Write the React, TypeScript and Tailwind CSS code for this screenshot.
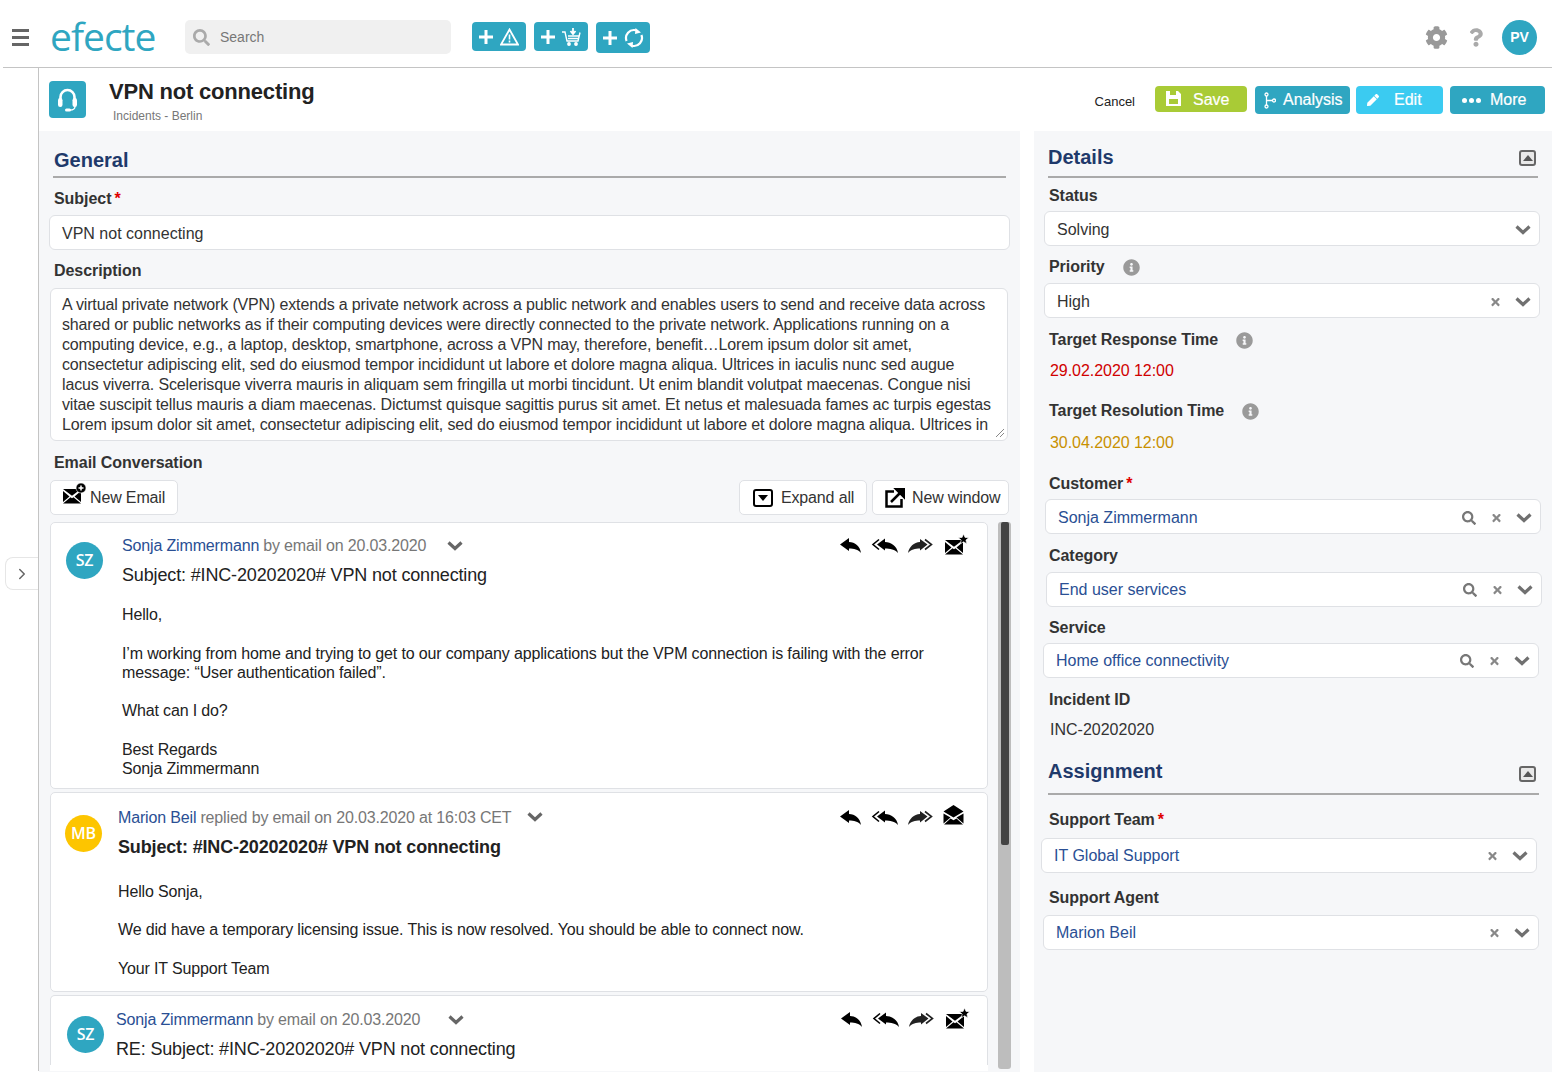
import { ReactNode } from "react";
import { FaCog, FaPen, FaTimes, FaSearch, FaQuestion, FaInfoCircle } from "react-icons/fa";
import { ChevronRight } from "lucide-react";

const DESCRIPTION = [
  "A virtual private network (VPN) extends a private network across a public network and enables users to send and receive data across",
  "shared or public networks as if their computing devices were directly connected to the private network. Applications running on a",
  "computing device, e.g., a laptop, desktop, smartphone, across a VPN may, therefore, benefit…Lorem ipsum dolor sit amet,",
  "consectetur adipiscing elit, sed do eiusmod tempor incididunt ut labore et dolore magna aliqua. Ultrices in iaculis nunc sed augue",
  "lacus viverra. Scelerisque viverra mauris in aliquam sem fringilla ut morbi tincidunt. Ut enim blandit volutpat maecenas. Congue nisi",
  "vitae suscipit tellus mauris a diam maecenas. Dictumst quisque sagittis purus sit amet. Et netus et malesuada fames ac turpis egestas",
  "Lorem ipsum dolor sit amet, consectetur adipiscing elit, sed do eiusmod tempor incididunt ut labore et dolore magna aliqua. Ultrices in",
];

function Envelope({ badge }: { badge?: "star" | "plus" }) {
  return (
    <svg width="24" height="21" viewBox="0 0 24 21">
      <path d="M0 6h18l-9 6.800z M0 8v11l6.500-5.500z M18 8v11l-6.500-5.500z M0 20.500h18l-7.500-6.200-1.500 1-1.500-1z" fill="#000" />
      {badge === "star" && <path d="M18.500 0l1.500 3.400 3.700.3-2.800 2.400.9 3.600-3.300-1.900-3.200 1.900.9-3.600-2.800-2.400 3.700-.3z" fill="#000" stroke="#fff" strokeWidth=".6" />}
      {badge === "plus" && (
        <g>
          <circle cx="18" cy="5" r="5" fill="#000" stroke="#fff" strokeWidth=".6" />
          <path d="M18 2.500v5M15.500 5h5" stroke="#fff" strokeWidth="1.500" />
        </g>
      )}
    </svg>
  );
}

function OpenEnvelope() {
  return (
    <svg width="21" height="20" viewBox="0 0 21 20">
      <path d="M10.500 0l10 6.500-10 6-10-6z M.5 8.500v10l7-6z M20.500 8.500v10l-7-6z M1 19.500h19l-6.500-6-3 1.700-3-1.700z" fill="#000" />
    </svg>
  );
}

function ReplyIcon() {
  return (
    <svg width="21" height="15" viewBox="0 0 21 15">
      <path d="M0 6.500L9 0v4c6 0 11 4 12 11-3-3.500-7-4.500-12-4.500V13z" fill="#000" />
    </svg>
  );
}

function ReplyAllIcon() {
  return (
    <svg width="27" height="15" viewBox="0 0 27 15">
      <path d="M8 1.500L2 6.500l6 5" stroke="#000" strokeWidth="1.600" fill="none" />
      <path d="M6 6.500L14 .5v3.500c6 0 12 4 13 11-3-3.500-8-4.500-13-4.500V12.500z" fill="#000" />
    </svg>
  );
}

function ForwardAllIcon() {
  return (
    <svg width="25" height="15" viewBox="0 0 25 15">
      <path d="M17 1.500l6.500 5-6.500 5" stroke="#222" strokeWidth="1.600" fill="none" />
      <path d="M19.500 6.500L12 1v3C6 4 1 9 0 15c3-3.500 7-4.500 12-4.500V12.500z" fill="#222" />
    </svg>
  );
}

function EmailActions({ open }: { open?: boolean }) {
  return (
    <div className="flex items-center">
      <ReplyIcon />
      <span className="ml-[10px] flex"><ReplyAllIcon /></span>
      <span className="ml-[10px] flex"><ForwardAllIcon /></span>
      {open ? (
        <span className="ml-[10px] flex -mt-[4px]"><OpenEnvelope /></span>
      ) : (
        <span className="ml-[12px] flex -mt-[2px]"><Envelope badge="star" /></span>
      )}
    </div>
  );
}

function Avatar({ initials, color }: { initials: string; color: string }) {
  return (
    <div
      className={`w-[37px] h-[37px] rounded-full flex items-center justify-center text-white text-[16px] font-semibold shrink-0 ${color}`}
      style={{ fontFamily: '"Open Sans", sans-serif' }}
    >
      {initials}
    </div>
  );
}

function HeadButton({ children, h = "h-[29px]" }: { children: ReactNode; h?: string }) {
  return (
    <div className={`${h} w-[54px] bg-[#2fa6c1] rounded-[4px] flex items-center pl-[7px] gap-[7px] text-white`}>
      <svg width="14" height="14" viewBox="0 0 14 14"><path d="M7 0v14M0 7h14" stroke="#fff" strokeWidth="3" /></svg>
      {children}
    </div>
  );
}

function ActionButton({ bg, w, h, children, className = "" }: { bg: string; w: string; h: string; children: ReactNode; className?: string }) {
  return (
    <div className={`${bg} ${w} ${h} ${className} rounded-[4px] flex items-center text-white text-[16px] tracking-normal [-webkit-text-stroke:0.2px_white]`}>
      {children}
    </div>
  );
}

function ToolButton({ icon, label, w }: { icon: ReactNode; label: string; w: string }) {
  return (
    <div className={`${w} h-[35px] bg-white border border-[#dfe1e5] rounded-[5px] flex items-center text-[16px] text-[#333] whitespace-nowrap`}>
      {icon}
      {label}
    </div>
  );
}

function Label({ text, required, info, className = "" }: { text: string; required?: boolean; info?: boolean; className?: string }) {
  return (
    <div className={`flex items-center h-[20px] text-[16px] font-bold text-[#333] tracking-[-0.05px] whitespace-nowrap ${className}`}>
      {text}
      {required && <span className="text-[#e00000] ml-[3px]">*</span>}
      {info && <FaInfoCircle className="w-[17px] h-[17px] text-[#9a9a9a] ml-[18px]" />}
    </div>
  );
}

function Chevron({ className = "" }: { className?: string }) {
  return (
    <svg width="16" height="11" viewBox="0 0 16 11" fill="none" className={className}>
      <path d="M1.500 2.500L8 8.500l6.500-6" stroke="currentColor" strokeWidth="3.200" />
    </svg>
  );
}

function Select({
  value,
  link,
  search,
  clear,
  className = "",
}: {
  value: string;
  link?: boolean;
  search?: boolean;
  clear?: boolean;
  className?: string;
}) {
  return (
    <div className={`h-[35px] w-[496px] bg-white border border-[#dfe1e5] rounded-[6px] flex items-center pl-[12px] pr-[8px] text-[16px] tracking-normal ${link ? "text-[#2a4f94]" : "text-[#333]"} ${className}`}>
      <span className="flex-1 whitespace-nowrap">{value}</span>
      {search && <FaSearch className="w-[14px] h-[14px] text-[#777] mr-[15px]" />}
      {clear && <FaTimes className="w-[11px] h-[12px] text-[#888] mr-[14px]" />}
      <Chevron className="text-[#707070]" />
    </div>
  );
}

function SectionToggle() {
  return (
    <div className="w-[17px] h-[16px] border-2 border-[#666] rounded-[3px] bg-[#e8e8e8] flex items-center justify-center">
      <div className="w-0 h-0 border-l-[5px] border-r-[5px] border-b-[6px] border-l-transparent border-r-transparent border-b-[#555]" />
    </div>
  );
}

export default function App() {
  return (
    <div className="w-[1552px] h-[1080px] bg-white overflow-hidden text-[#222] tracking-[-0.15px]" style={{ fontFamily: '"Liberation Sans", Arial, sans-serif' }}>
      {/* top bar */}
      <div className="h-[68px] ml-[3px] border-b border-[#c4c4c4] flex items-center pt-[7px]">
        <div className="ml-[9px] w-[17px] flex flex-col gap-[4px] mt-[1px]">
          <div className="h-[3px] bg-[#666]" />
          <div className="h-[3px] bg-[#666]" />
          <div className="h-[3px] bg-[#666]" />
        </div>
        <div className="ml-[21px] w-[110px] -mt-[4px] text-[39px] leading-none text-[#2fa6c1] font-normal tracking-[-1px]" style={{ fontFamily: '"Open Sans", sans-serif' }}>
          efecte
        </div>
        <div className="ml-[25px] w-[266px] h-[34px] bg-[#f0f0f0] rounded-[5px] flex items-center pl-[8px] text-[14px] text-[#777] tracking-normal">
          <FaSearch className="w-[17px] h-[17px] text-[#aaa] mr-[10px]" />
          Search
        </div>
        <div className="ml-[21px] flex gap-[8px] items-start h-[31px] mt-[1px]">
          <HeadButton>
            <svg width="19" height="18" viewBox="0 0 19 18" fill="none"><path d="M9.500 1.500L18 16.500H1z" stroke="#fff" strokeWidth="1.800" /><path d="M9.500 6.500v5M9.500 12.500v2" stroke="#fff" strokeWidth="1.600" /></svg>
          </HeadButton>
          <HeadButton>
            <svg width="19" height="18" viewBox="0 0 19 18" fill="none" stroke="#fff" strokeWidth="1.400"><path d="M0 4h3l2 9h11l2-8.500M6 8h11M6 10.500h10" /><path d="M11 0v5M8.500 3l2.500 3 2.500-3" strokeWidth="1.800" /><circle cx="7" cy="16" r="1.200" fill="#fff" /><circle cx="14" cy="16" r="1.200" fill="#fff" /></svg>
          </HeadButton>
          <HeadButton h="h-[31px]">
            <svg width="20" height="20" viewBox="0 0 20 20" fill="none" stroke="#fff" strokeWidth="2.200">
              <path d="M2.600 13A8 8 0 0 1 12 2.300" />
              <path d="M17.400 7A8 8 0 0 1 8 17.700" />
              <path d="M11.500 0L17 4.500 11 6zM8.500 20L3 15.500 9 14z" fill="#fff" stroke="none" />
            </svg>
          </HeadButton>
        </div>
        <div className="ml-auto mr-[15px] flex items-center">
          <FaCog className="w-[23px] h-[23px] text-[#999]" />
          <FaQuestion className="w-[14px] h-[19px] text-[#aaa] ml-[21px]" />
          <div className="ml-[19px] w-[35px] h-[35px] rounded-full bg-[#2fa6c1] text-white text-[14px] font-bold flex items-center justify-center tracking-normal">PV</div>
        </div>
      </div>

      <div className="flex">
        {/* collapsed left rail */}
        <div className="w-[39px] h-[1003px] border-r border-[#c4c4c4] shrink-0 pt-[489px] pl-[5px]">
          <div className="w-[33px] h-[33px] border border-r-0 border-[#e6e6e6] rounded-l-[8px] flex items-center justify-center text-[#666]">
            <ChevronRight className="w-[18px] h-[18px]" />
          </div>
        </div>

        <div className="flex-1">
          {/* title row */}
          <div className="h-[63px] flex">
            <div className="ml-[10px] mt-[13px] w-[37px] h-[37px] bg-[#2fa6c1] rounded-[4px] flex items-center justify-center">
              <svg width="21" height="24" viewBox="0 0 21 24" fill="none" stroke="#fff" strokeLinecap="round">
                <path d="M3.500 14V9a7 7 0 0 1 14 0v5" strokeWidth="2.600" />
                <rect x="1" y="10" width="4.500" height="9" rx="2.200" fill="#fff" stroke="none" />
                <rect x="15.500" y="10" width="4.500" height="9" rx="2.200" fill="#fff" stroke="none" />
                <path d="M18 18.500c0 2.500-2.500 3.500-5 3.500" strokeWidth="1.300" />
                <rect x="8" y="20.500" width="6" height="3" rx="1.500" fill="#fff" stroke="none" />
              </svg>
            </div>
            <div className="ml-[23px]">
              <div className="mt-[10px] text-[22px] leading-[28px] font-bold text-[#222] tracking-[-0.2px] whitespace-nowrap">VPN not connecting</div>
              <div className="mt-[3px] ml-[4px] text-[12px] leading-[14px] text-[#777] tracking-normal">Incidents - Berlin</div>
            </div>
            <div className="ml-auto mr-[7px] flex items-start mt-[18px]">
              <div className="text-[13px] mt-[6px] mr-[20px] text-[#222] tracking-normal">Cancel</div>
              <ActionButton bg="bg-[#a9cb36]" w="w-[92px]" h="h-[26px]" className="pl-[11px] pt-[1px]">
                <svg width="15" height="15" viewBox="0 0 15 15" className="mr-[12px] -mt-[2px]">
                  <path d="M0 0h12l3 3v12H0z M4 0v4h6V0z M3 8v5h9V8z" fill="#fff" fillRule="evenodd" />
                </svg>
                Save
              </ActionButton>
              <ActionButton bg="bg-[#2fa6c1]" w="w-[95px]" h="h-[28px]" className="ml-[8px] pl-[9px]">
                <svg width="12" height="17" viewBox="0 0 12 17" fill="none" stroke="#fff" strokeWidth="1.300" className="mr-[7px]"><circle cx="2.500" cy="2.500" r="1.500" /><circle cx="2.500" cy="14.500" r="1.500" /><circle cx="10" cy="8.500" r="1.500" /><path d="M2.500 4v9M2.500 8.500h6" /></svg>
                Analysis
              </ActionButton>
              <ActionButton bg="bg-[#3bcbf1]" w="w-[87px]" h="h-[28px]" className="ml-[6px] pl-[11px]">
                <FaPen className="w-[12px] h-[12px] mr-[15px]" /> Edit
              </ActionButton>
              <ActionButton bg="bg-[#2fa6c1]" w="w-[95px]" h="h-[28px]" className="ml-[7px] pl-[12px]">
                <span className="flex gap-[2px] mr-[9px]">
                  <span className="w-[5px] h-[5px] rounded-full bg-white" />
                  <span className="w-[5px] h-[5px] rounded-full bg-white" />
                  <span className="w-[5px] h-[5px] rounded-full bg-white" />
                </span>
                More
              </ActionButton>
            </div>
          </div>

          <div className="flex">
            {/* General */}
            <div className="w-[981px] h-[941px] bg-[#f6f7f9] shrink-0 overflow-hidden">
              <div className="ml-[14px] mr-[14px] mt-[17px] h-[30px] border-b-2 border-[#aaa] text-[20px] leading-[24px] font-bold text-[#1f3a6b] tracking-normal pl-[1px]">General</div>
              <Label text="Subject" required className="ml-[15px] mt-[11px]" />
              <div className="ml-[10px] mt-[6px] w-[961px] h-[35px] bg-white border border-[#dfe1e5] rounded-[6px] flex items-center pl-[12px] pt-[2px] text-[16px] text-[#333] tracking-normal">VPN not connecting</div>
              <Label text="Description" className="ml-[15px] mt-[11px]" />
              <div className="ml-[11px] mt-[7px] w-[958px] h-[153px] bg-white border border-[#dfe1e5] rounded-[6px] pl-[11px] pt-[6px] text-[16px] leading-[20px] text-[#333] relative overflow-hidden">
                {DESCRIPTION.map((line) => (
                  <div key={line} className="whitespace-pre">{line}</div>
                ))}
                <svg width="10" height="10" viewBox="0 0 10 10" className="absolute right-[2px] bottom-[2px]" stroke="#888"><path d="M9 1L1 9M9 5L5 9" /></svg>
              </div>
              <Label text="Email Conversation" className="ml-[15px] mt-[12px]" />
              <div className="flex ml-[11px] mt-[7px] w-[959px]">
                <ToolButton w="w-[128px]" label="New Email" icon={<span className="ml-[12px] mr-[3px] -mt-[8px] flex"><Envelope badge="plus" /></span>} />
                <ToolButton
                  w="w-[128px] ml-auto"
                  label="Expand all"
                  icon={
                    <span className="ml-[13px] mr-[8px] w-[20px] h-[18px] border-2 border-black rounded-[3px] flex items-center justify-center">
                      <span className="w-0 h-0 border-l-[5px] border-r-[5px] border-t-[6px] border-l-transparent border-r-transparent border-t-black" />
                    </span>
                  }
                />
                <ToolButton
                  w="w-[137px] ml-[5px]"
                  label="New window"
                  icon={
                    <svg width="20" height="20" viewBox="0 0 20 20" fill="none" className="ml-[12px] mr-[7px]">
                      <path d="M9 3.500H1.500v15h15V11" stroke="#000" strokeWidth="2.500" />
                      <path d="M6 14L15 5M11 1h8v8z" stroke="#000" strokeWidth="2.500" fill="#000" />
                    </svg>
                  }
                />
              </div>

              <div className="flex ml-[11px] mt-[7px] h-[549px] overflow-hidden">
                <div className="w-[938px] shrink-0 flex flex-col gap-[3px]">
                  {/* first mail */}
                  <div className="h-[267px] bg-white border border-[#dfe1e5] rounded-[5px] flex text-[16px] leading-[19px] text-[#222] shrink-0">
                    <div className="ml-[15px] mt-[19px]"><Avatar initials="SZ" color="bg-[#2fa6c1]" /></div>
                    <div className="ml-[19px] flex-1">
                      <div className="flex items-center mt-[12px] h-[20px] mr-[18px]">
                        <span className="text-[#2a4f94]">Sonja Zimmermann</span>
                        <span className="text-[#777] ml-[4px]">by email on 20.03.2020</span>
                        <Chevron className="ml-[21px] text-[#666]" />
                        <span className="ml-auto"><EmailActions /></span>
                      </div>
                      <div className="mt-[9px] text-[18px] leading-[22px]">Subject: #INC-20202020# VPN not connecting</div>
                      <div className="mt-[19px]">Hello,</div>
                      <div className="mt-[20px]">I’m working from home and trying to get to our company applications but the VPM connection is failing with the error</div>
                      <div>message: “User authentication failed”.</div>
                      <div className="mt-[19px]">What can I do?</div>
                      <div className="mt-[20px]">Best Regards</div>
                      <div>Sonja Zimmermann</div>
                    </div>
                  </div>
                  {/* reply */}
                  <div className="h-[200px] bg-white border border-[#dfe1e5] rounded-[5px] flex text-[16px] leading-[19px] text-[#222] shrink-0">
                    <div className="ml-[14px] mt-[22px]"><Avatar initials="MB" color="bg-[#fdc500]" /></div>
                    <div className="ml-[16px] flex-1">
                      <div className="flex items-center mt-[14px] h-[20px] mr-[23px]">
                        <span className="text-[#2a4f94]">Marion Beil</span>
                        <span className="text-[#777] ml-[4px]">replied by email on 20.03.2020 at 16:03 CET</span>
                        <Chevron className="ml-[16px] -mt-[2px] text-[#666]" />
                        <span className="ml-auto"><EmailActions open /></span>
                      </div>
                      <div className="mt-[9px] text-[18px] leading-[22px] font-bold">Subject: #INC-20202020# VPN not connecting</div>
                      <div className="mt-[24px]">Hello Sonja,</div>
                      <div className="mt-[19px]">We did have a temporary licensing issue. This is now resolved. You should be able to connect now.</div>
                      <div className="mt-[20px]">Your IT Support Team</div>
                    </div>
                  </div>
                  {/* second customer mail, cut off by the panel */}
                  <div className="h-[70px] bg-white border border-b-0 border-[#dfe1e5] rounded-t-[5px] flex text-[16px] leading-[19px] text-[#222] shrink-0">
                    <div className="ml-[16px] mt-[20px]"><Avatar initials="SZ" color="bg-[#2fa6c1]" /></div>
                    <div className="ml-[12px] flex-1">
                      <div className="flex items-center mt-[13px] h-[20px] mr-[17px]">
                        <span className="text-[#2a4f94]">Sonja Zimmermann</span>
                        <span className="text-[#777] ml-[4px]">by email on 20.03.2020</span>
                        <Chevron className="ml-[28px] text-[#666]" />
                        <span className="ml-auto"><EmailActions /></span>
                      </div>
                      <div className="mt-[9px] text-[18px] leading-[22px]">RE: Subject: #INC-20202020# VPN not connecting</div>
                    </div>
                  </div>
                  <div className="flex-1 bg-white -mt-[3px]" />
                </div>
                <div className="ml-[10px] w-[13px] h-[547px] bg-[#bdbdbd] rounded-[3px] flex justify-center shrink-0">
                  <div className="w-[8px] h-[323px] bg-[#444] rounded-[2px]" />
                </div>
              </div>
            </div>

            <div className="w-[14px] shrink-0" />

            {/* Details */}
            <div className="flex-1 h-[941px] bg-[#f6f7f9] overflow-hidden">
              <div className="ml-[14px] mr-[14px] mt-[14px] h-[33px] border-b-2 border-[#aaa] flex items-start justify-between text-[20px] leading-[24px] font-bold text-[#1f3a6b] tracking-normal">
                <span>Details</span>
                <span className="mt-[5px] mr-[2px]"><SectionToggle /></span>
              </div>
              <Label text="Status" className="ml-[15px] mt-[8px]" />
              <Select value="Solving" className="ml-[10px] mt-[5px] pt-[2px]" />
              <Label text="Priority" info className="ml-[15px] mt-[11px]" />
              <Select value="High" clear className="ml-[10px] mt-[6px] w-[495px] pt-[2px]" />
              <Label text="Target Response Time" info className="ml-[15px] mt-[12px]" />
              <div className="ml-[16px] mt-[9px] h-[20px] text-[16px] text-[#d00000] tracking-[-0.05px]">29.02.2020 12:00</div>
              <Label text="Target Resolution Time" info className="ml-[15px] mt-[22px]" />
              <div className="ml-[16px] mt-[10px] h-[20px] text-[16px] text-[#c89000] tracking-[-0.05px]">30.04.2020 12:00</div>
              <Label text="Customer" required className="ml-[15px] mt-[23px]" />
              <Select value="Sonja Zimmermann" link search clear className="ml-[11px] mt-[5px] pt-[2px]" />
              <Label text="Category" className="ml-[15px] mt-[12px]" />
              <Select value="End user services" link search clear className="ml-[12px] mt-[6px]" />
              <Label text="Service" className="ml-[15px] mt-[11px]" />
              <Select value="Home office connectivity" link search clear className="ml-[9px] mt-[5px]" />
              <Label text="Incident ID" className="ml-[15px] mt-[12px]" />
              <div className="ml-[16px] mt-[8px] h-[20px] text-[16px] text-[#333] tracking-normal">INC-20202020</div>
              <div className="ml-[14px] mr-[13px] mt-[21px] h-[36px] border-b-2 border-[#aaa] flex items-start justify-between text-[20px] leading-[24px] font-bold text-[#1f3a6b] tracking-normal">
                <span>Assignment</span>
                <span className="mt-[7px] mr-[3px]"><SectionToggle /></span>
              </div>
              <Label text="Support Team" required className="ml-[15px] mt-[15px]" />
              <Select value="IT Global Support" link clear className="ml-[7px] mt-[8px]" />
              <Label text="Support Agent" className="ml-[15px] mt-[15px]" />
              <Select value="Marion Beil" link clear className="ml-[9px] mt-[7px]" />
            </div>
          </div>
        </div>
      </div>
    </div>
  );
}
